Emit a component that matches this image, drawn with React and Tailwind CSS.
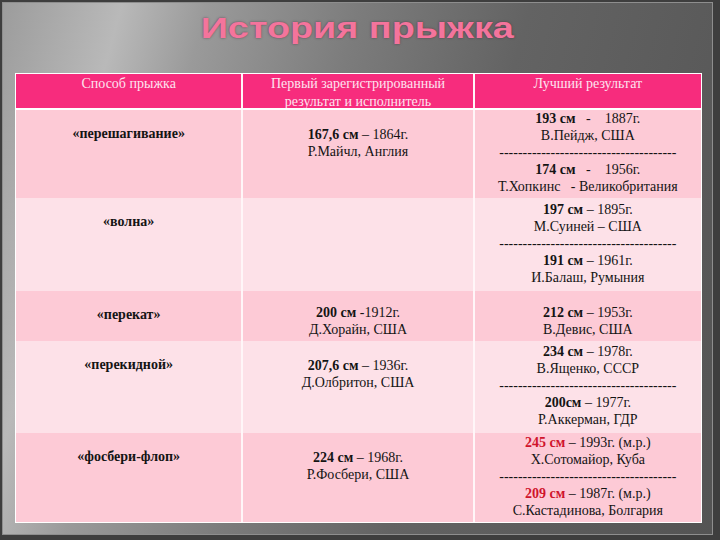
const DASH = '--------------------------------------';

const Entry = ({ mark, rest, red }) => (
  <div>
    <span className={red ? 'font-bold text-[#d0142c]' : 'font-bold'}>{mark}</span>
    {rest}
  </div>
);

const rows = [
  {
    name: '«перешагивание»',
    first: [{ mark: '167,6 см', rest: ' – 1864г.', who: 'Р.Майчл, Англия' }],
    best: [
      { mark: '193 см', rest: '\u00a0\u00a0 - \u00a0\u00a0 1887г.', who: 'В.Пейдж, США' },
      { mark: '174 см', rest: '\u00a0\u00a0 - \u00a0\u00a0 1956г.', who: 'Т.Хопкинс \u00a0 - Великобритания' },
    ],
    h: 'h-[88px]',
    bg: 'bg-[#fdcad6]',
  },
  {
    name: '«волна»',
    first: [],
    best: [
      { mark: '197 см', rest: ' – 1895г.', who: 'М.Суиней – США' },
      { mark: '191 см', rest: ' – 1961г.', who: 'И.Балаш, Румыния' },
    ],
    h: 'h-[93px]',
    bg: 'bg-[#fde1e8]',
  },
  {
    name: '«перекат»',
    first: [{ mark: '200 см', rest: ' -1912г.', who: 'Д.Хорайн, США' }],
    best: [{ mark: '212 см', rest: ' – 1953г.', who: 'В.Девис, США' }],
    h: 'h-[50px]',
    bg: 'bg-[#fdcad6]',
    top: true,
  },
  {
    name: '«перекидной»',
    first: [{ mark: '207,6 см', rest: ' – 1936г.', who: 'Д.Олбритон, США' }],
    best: [
      { mark: '234 см', rest: ' – 1978г.', who: 'В.Ященко, СССР' },
      { mark: '200см', rest: ' – 1977г.', who: 'Р.Аккерман, ГДР' },
    ],
    h: 'h-[92px]',
    bg: 'bg-[#fde1e8]',
  },
  {
    name: '«фосбери-флоп»',
    first: [{ mark: '224 см', rest: ' – 1968г.', who: 'Р.Фосбери, США' }],
    best: [
      { mark: '245 см', rest: ' – 1993г. (м.р.)', who: 'Х.Сотомайор, Куба', red: true },
      { mark: '209 см', rest: ' – 1987г. (м.р.)', who: 'С.Кастадинова, Болгария', red: true },
    ],
    h: 'h-[89px]',
    bg: 'bg-[#fdcad6]',
  },
];

export default function App() {
  return (
    <div className="w-[720px] h-[540px] bg-[#3e3e3e] pt-[2px] pl-[2px] pr-[7px] pb-[5px] overflow-hidden">
      <div className="h-full border border-[#8e8e8e] bg-[linear-gradient(105deg,#9c9c9c_0%,#b9b9b9_14%,#9a9a9a_24%,#7c7c7c_42%,#636363_62%,#545454_100%)] flex flex-col">
        {/* Заголовок */}
        <div className="h-[70px] flex justify-center pt-[9px]">
          <h1 className="font-['Liberation_Sans',Arial,sans-serif] font-bold text-[30px] leading-[32px] text-[#f4749c] scale-x-[1.26] origin-center [text-shadow:0_0_2px_rgba(60,20,40,0.6)]">
            История прыжка
          </h1>
        </div>

        {/* Таблица */}
        <div className="ml-[12px] w-[687px] border border-white bg-[#fff6f8] flex flex-col font-['Liberation_Serif','Times_New_Roman',serif] text-[14px] leading-[17px] text-[#141414]">
          <div className="flex gap-x-[2px] h-[34px]">
            <div className="w-[226px] bg-[#f72c7d] text-center text-[#fde3ef] pt-[1px] leading-[18px]">Способ прыжка</div>
            <div className="w-[230px] bg-[#f72c7d] text-center text-[#fde3ef] pt-[1px] leading-[18px]">
              Первый зарегистрированный
              <br />
              результат и исполнитель
            </div>
            <div className="w-[227px] bg-[#f72c7d] text-center text-[#fde3ef] pt-[1px] leading-[18px]">Лучший результат</div>
          </div>
          <div className="h-[2px] bg-white" />
          {rows.map((r) => (
            <div key={r.name} className={`flex gap-x-[2px] ${r.h}`}>
              <div className={`w-[226px] ${r.bg} text-center font-bold pt-[15px]`}>{r.name}</div>
              <div className={`w-[230px] ${r.bg} text-center ${r.top ? 'pt-[13px]' : 'pt-[16px]'}`}>
                {r.first.map((e) => (
                  <div key={e.who}>
                    <Entry mark={e.mark} rest={e.rest} />
                    <div>{e.who}</div>
                  </div>
                ))}
              </div>
              <div
                className={`w-[227px] ${r.bg} text-center flex flex-col ${
                  r.top ? 'justify-start pt-[13px]' : 'justify-center pb-[3px]'
                }`}
              >
                {r.best.map((e, i) => (
                  <div key={e.who}>
                    {i > 0 && <div className="overflow-hidden whitespace-nowrap">{DASH}</div>}
                    <Entry mark={e.mark} rest={e.rest} red={e.red} />
                    <div className="whitespace-nowrap">{e.who}</div>
                  </div>
                ))}
              </div>
            </div>
          ))}
        </div>
      </div>
    </div>
  );
}
